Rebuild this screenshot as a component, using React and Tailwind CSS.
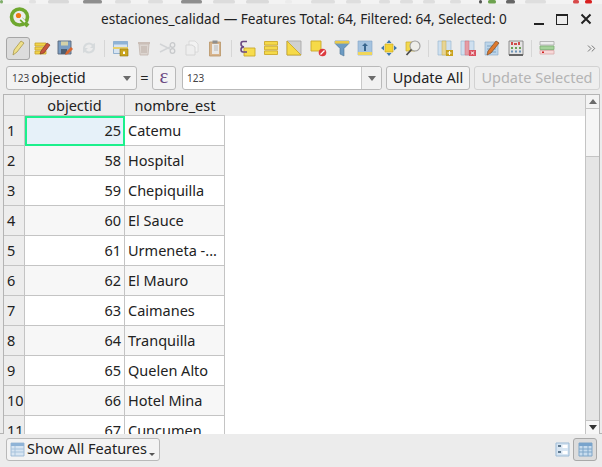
import React from 'react'
import { ChevronsRight } from 'lucide-react'

const font = { fontFamily: '"Noto Sans", sans-serif' }

const rows = [
  [1, 25, 'Catemu'],
  [2, 58, 'Hospital'],
  [3, 59, 'Chepiquilla'],
  [4, 60, 'El Sauce'],
  [5, 61, 'Urmeneta -...'],
  [6, 62, 'El Mauro'],
  [7, 63, 'Caimanes'],
  [8, 64, 'Tranquilla'],
  [9, 65, 'Quelen Alto'],
  [10, 66, 'Hotel Mina'],
  [11, 67, 'Cuncumen'],
]

// x, width, colour of what shows of the desktop above the window
const desktopBits = [
  [0, 3, '#7fae6a'], [29, 7, '#e2e2e2'], [48, 21, '#d9d9d9'], [83, 19, '#8e8e8e'],
  [115, 16, '#dedede'], [148, 15, '#dedede'], [181, 21, '#8e8e8e'], [213, 22, '#dcdcdc'],
  [246, 23, '#dadada'], [285, 7, '#ececec'], [311, 24, '#dedede'], [346, 15, '#dedede'],
  [379, 11, '#dedede'], [400, 13, '#dedede'], [423, 12, '#dedede'], [450, 11, '#dedede'],
  [479, 3, '#555555'], [488, 8, '#6da24f'], [506, 9, '#666666'], [525, 21, '#dedede'],
  [573, 6, '#d84a4a'], [585, 7, '#d81f1f'],
]

function Svg({ children, size = 18 }) {
  return (
    <svg width={size} height={size} viewBox="0 0 18 18" className="block">
      {children}
    </svg>
  )
}

function Logo() {
  return (
    <svg width="24" height="24" viewBox="0 0 24 24" className="block">
      <circle cx="11.5" cy="11" r="8" fill="none" stroke="#6fa82f" strokeWidth="3.6" />
      <path d="M13 13l7 7" stroke="#6fa82f" strokeWidth="4" />
      <path d="M11 10l6 6" stroke="#f5f5f5" strokeWidth="2" />
      <circle cx="10.5" cy="9.5" r="2.6" fill="#ee7913" />
    </svg>
  )
}

const icons = {
  toggle: (
    <Svg>
      <path d="M4 16l1-5 7-9 3 2-7 9z" fill="#efe08a" stroke="#a8984e" strokeWidth=".8" />
    </Svg>
  ),
  edits: (
    <Svg>
      <path d="M2 4h11v3H2zM2 8h11v3H2zM2 12h11v3H2z" fill="#f1d34a" stroke="#c9a52b" strokeWidth=".8" />
      <path d="M7 15l1-3 6-8 3 2-6 8z" fill="#c8553d" stroke="#7e3526" strokeWidth=".7" />
    </Svg>
  ),
  save: (
    <Svg>
      <path d="M2 2h13v13H2z" fill="#7b9dc2" stroke="#59677a" strokeWidth=".9" />
      <path d="M5 2.500h7v4H5z" fill="#d6d2a8" />
      <path d="M5 10h6v5H5z" fill="#4e5d70" />
      <path d="M9 16l1-3 5-5 2 2-5 5z" fill="#d8662f" />
    </Svg>
  ),
  reload: (
    <Svg>
      <path d="M3 9a6 6 0 0 1 10-4l2-1v5h-5l2-2a4 4 0 0 0-7 2zM15 9a6 6 0 0 1-10 4l-2 1V9h5l-2 2a4 4 0 0 0 7-2z" fill="#d6dadc" />
    </Svg>
  ),
  add: (
    <Svg>
      <path d="M1.500 2.500h14v12h-14z" fill="#d7e4f1" stroke="#7fa3c6" strokeWidth=".8" />
      <path d="M1.500 2.500h14v3h-14z" fill="#8fb3d6" />
      <path d="M1 8h15v2H1z" fill="#e8cf6a" />
      <path d="M8 10h8v7H8z" fill="#caa51e" stroke="#927712" strokeWidth=".6" />
      <path d="M11 12l1 1 1-1v3h-2z" fill="#fff" />
    </Svg>
  ),
  trash: (
    <Svg>
      <path d="M4 5h10l-1 11H5z" fill="#dcd5d0" stroke="#c3b6ae" strokeWidth=".8" />
      <path d="M3 3h12v2H3z" fill="#cbbfb8" />
      <path d="M7 7v7M9 7v7M11 7v7" stroke="#bcaea6" />
    </Svg>
  ),
  cut: (
    <Svg>
      <path d="M1 5l10 5M1 13l10-5" stroke="#d2d4d6" strokeWidth="1.400" />
      <circle cx="13.500" cy="6" r="2.300" fill="none" stroke="#c7c9cb" strokeWidth="1.300" />
      <circle cx="13.500" cy="12" r="2.300" fill="none" stroke="#c7c9cb" strokeWidth="1.300" />
    </Svg>
  ),
  copy: (
    <Svg>
      <path d="M6 2h6l3 3v8H6z" fill="#f2f2f2" stroke="#d8d8d8" strokeWidth=".9" />
      <path d="M3 6h6l3 2v8H3z" fill="#eeeeee" stroke="#d2d2d2" strokeWidth=".9" />
    </Svg>
  ),
  paste: (
    <Svg>
      <path d="M3.500 3h11v14h-11z" fill="#d8b48c" stroke="#b99467" strokeWidth=".8" />
      <path d="M6 5h7v10H6z" fill="#e9e9e9" />
      <path d="M6.500 1.500h5v3h-5z" fill="#8f8f8f" />
      <path d="M8 7h4M8 9h4M8 11h4" stroke="#b9b9b9" />
    </Svg>
  ),
  expr: (
    <Svg>
      <path d="M6 9h11v8H6z" fill="#f7dc4d" stroke="#c9a92b" strokeWidth=".9" />
      <path d="M9 2.500H5Q3 2.500 3 5t3 3Q3 8 3 10.500T5 13h4" fill="none" stroke="#6b4a82" strokeWidth="1.600" />
    </Svg>
  ),
  selectAll: (
    <Svg>
      <path d="M2.500 2.500h13v3.600h-13zM2.500 7.200h13v3.600h-13zM2.500 11.900h13v3.600h-13z" fill="#f5da4a" stroke="#cca92b" strokeWidth=".9" />
    </Svg>
  ),
  invert: (
    <Svg>
      <path d="M2 2h14v14H2z" fill="#d0d0d0" stroke="#aaa" strokeWidth=".9" />
      <path d="M2 2l14 14H2z" fill="#f6da48" stroke="#c9a92b" strokeWidth=".9" />
    </Svg>
  ),
  deselect: (
    <Svg>
      <path d="M2 2h10v10H2z" fill="#f6da48" stroke="#c9a92b" strokeWidth=".9" />
      <circle cx="13.500" cy="13.500" r="3.800" fill="#dc3a3f" />
      <path d="M11.500 15.500l4-4" stroke="#fff" strokeWidth="1.200" />
    </Svg>
  ),
  filter: (
    <Svg>
      <path d="M2 2h14v2.400l-5 5V17l-4-2V9.400l-5-5z" fill="#6c9bc3" stroke="#4f7595" strokeWidth=".6" />
      <path d="M2 2h14v2.600H2z" fill="#e9c94a" />
    </Svg>
  ),
  moveTop: (
    <Svg>
      <path d="M2 2h14v14H2z" fill="#a5c3df" stroke="#7fa3c6" strokeWidth=".6" />
      <path d="M2 13h14v3H2z" fill="#f0d65a" />
      <path d="M9 4l3 3h-2v5H8V7H6z" fill="#38658d" />
    </Svg>
  ),
  pan: (
    <Svg>
      <path d="M5 5h8v8H5z" fill="#f3d437" stroke="#c9a92b" strokeWidth=".7" />
      <path d="M9 1l2.500 3h-5zM9 17l2.500-3h-5zM1 9l3-2.500v5zM17 9l-3-2.500v5z" fill="#3e76ad" />
    </Svg>
  ),
  zoom: (
    <Svg>
      <path d="M2 3h9v9H2z" fill="#f3d94e" stroke="#c9a92b" strokeWidth=".7" />
      <circle cx="11" cy="7" r="5" fill="#eeeeea" stroke="#9e9e9e" strokeWidth="1.100" />
      <path d="M7.500 10.500L2.500 16" stroke="#4b4b4b" strokeWidth="1.800" />
    </Svg>
  ),
  newField: (
    <Svg>
      <path d="M2 2h13v14H2z" fill="#cfe0ef" stroke="#92b1cd" strokeWidth=".6" />
      <path d="M6 2h4v14H6z" fill="#e7d596" stroke="#c7ab4a" strokeWidth=".5" />
      <path d="M10 11h7v6h-7z" fill="#c9a21d" />
      <path d="M13.500 12v4M11.500 14h4" stroke="#fff" />
    </Svg>
  ),
  delField: (
    <Svg>
      <path d="M2 2h13v14H2z" fill="#cfe0ef" stroke="#92b1cd" strokeWidth=".6" />
      <path d="M6 2h4v14H6z" fill="#e59ca4" stroke="#cf6f7b" strokeWidth=".5" />
      <path d="M10 11h7v6h-7z" fill="#d9505e" />
      <path d="M11.800 12.500l3.400 3M15.200 12.500l-3.400 3" stroke="#fff" />
    </Svg>
  ),
  editField: (
    <Svg>
      <path d="M2 3h13v13H2z" fill="#bcd5ea" stroke="#86a9c8" strokeWidth=".6" />
      <path d="M4 7h9M4 10h9M4 13h9" stroke="#7ea3c3" />
      <path d="M4 16l1-4 8-10 3 2-8 10z" fill="#de7a2f" stroke="#7e4a23" strokeWidth=".7" />
    </Svg>
  ),
  calc: (
    <Svg>
      <path d="M2 2h14v14H2z" fill="#e4e4e4" stroke="#777" strokeWidth=".8" />
      <path d="M2 15h14v2H2z" fill="#666" />
      <path d="M4 3h2v3H4zM11 3h2v3h-2z" fill="#cf4c4c" />
      <path d="M7 4h3v2H7z" fill="#cf4c4c" />
      <path d="M4 8h2v2H4zM8 8h2v2H8zM12 8h2v2h-2z" fill="#6a9e55" />
      <path d="M4 11.500h2v2H4zM8 11.500h2v2H8zM12 11.500h2v2h-2z" fill="#6d94b8" />
    </Svg>
  ),
  cond: (
    <Svg>
      <path d="M2 2.500h14v3.500H2z" fill="#ededed" stroke="#a9a9a9" strokeWidth=".8" />
      <path d="M2 7h14v3.500H2z" fill="#a5d39a" stroke="#7eae73" strokeWidth=".8" />
      <path d="M2 11.500h14V15H2z" fill="#f7d8d8" stroke="#d8a8a8" strokeWidth=".8" />
      <path d="M4 13.200h2" stroke="#d21f1f" strokeWidth="1.400" />
    </Svg>
  ),
}

function ToolBtn({ name, active }) {
  return (
    <div
      className={`w-[23.7px] h-[23px] flex items-center justify-center rounded-[3px] ${
        active ? 'bg-[#dcdcdc] border border-[#a6a6a6]' : ''
      }`}
    >
      {icons[name]}
    </div>
  )
}

const Sep = () => (
  <div className="w-[8px] flex justify-center">
    <div className="w-px h-[17px] bg-[#d6d6d6]" />
  </div>
)

function Toolbar() {
  const groups = [
    ['edits', 'save', 'reload'],
    ['add', 'trash', 'cut', 'copy', 'paste'],
    ['expr', 'selectAll', 'invert', 'deselect', 'filter', 'moveTop', 'pan', 'zoom'],
    ['newField', 'delField', 'editField', 'calc'],
    ['cond'],
  ]
  return (
    <div className="h-[28px] pl-[6px] pr-[3px] flex items-center">
      <ToolBtn name="toggle" active />
      {groups.map((g, i) => (
        <React.Fragment key={i}>
          {g.map((n) => <ToolBtn key={n} name={n} />)}
          {i < groups.length - 1 && <Sep />}
        </React.Fragment>
      ))}
      <div className="ml-auto mr-[1px] text-[#666]">
        <ChevronsRight size={13} strokeWidth={1.6} />
      </div>
    </div>
  )
}

const Caret = ({ className = '' }) => (
  <div className={`w-0 h-0 border-x-[4.5px] border-x-transparent border-t-[5px] border-t-[#6b6b6b] ${className}`} />
)

const Tag = () => <span className="text-[10px] text-[#444] leading-none mr-[2px]">123</span>

function UpdateBar() {
  return (
    <div className="h-[24px] mt-[4px] pl-[6px] pr-[2px] flex items-stretch text-[14.5px] text-[#222]">
      <div className="w-[131px] bg-[#f3f3f3] border border-[#b9b9b9] rounded-[3px] flex items-center pl-[5px] pr-[5px]">
        <Tag />
        <span className="flex-1">objectid</span>
        <Caret />
      </div>
      <div className="w-[15px] flex items-center justify-center">=</div>
      <div className="w-[24px] bg-[#f3f3f3] border border-[#b9b9b9] rounded-[3px] flex items-center justify-center text-[#6b4a82] text-[21px] leading-none pb-[3px] font-['Liberation_Serif',serif]">
        ε
      </div>
      <div className="w-[200px] ml-[6px] bg-white border border-[#b9b9b9] rounded-[3px] flex items-center">
        <div className="flex-1 pl-[4px] flex items-center"><Tag /></div>
        <div className="w-[20px] h-full border-l border-[#c9c9c9] bg-[#f1f1f1] rounded-r-[3px] flex items-center justify-center">
          <Caret />
        </div>
      </div>
      <button className="w-[84px] ml-[4px] bg-[#f3f3f3] border border-[#b9b9b9] rounded-[3px]">Update All</button>
      <button className="w-[126px] ml-[4px] bg-[#eeeeee] border border-[#d2d2d2] rounded-[3px] text-[#b4b4b4]">Update Selected</button>
    </div>
  )
}

function Scrollbar() {
  return (
    <div className="w-[14px] border-l border-[#c4c4c4] flex flex-col bg-[#e5e5e5]">
      <div className="h-[14px] bg-[#f3f3f3] border-b border-[#c4c4c4] flex items-center justify-center">
        <Caret className="rotate-180" />
      </div>
      <div className="h-[48px] bg-[#f5f5f5] border-b border-[#c4c4c4]" />
      <div className="flex-1" />
      <div className="h-[14px] bg-[#f7f7f7] border-t border-[#c4c4c4] flex items-center justify-center">
        <Caret className="border-t-[#333]" />
      </div>
    </div>
  )
}

function Table() {
  return (
    <div className="h-[340px] ml-[3px] mr-[2px] mt-[4px] border border-b-0 border-[#b4b4b4] flex overflow-hidden">
      <div className="flex-1 min-w-0 flex flex-col overflow-hidden bg-white">
        <div className="h-[21px] shrink-0 bg-[#ededed] flex text-[14.5px] text-[#222] leading-[21px]">
          <div className="w-[21px] border-r border-b border-[#c4c4c4]" />
          <div className="w-[100px] border-r border-b border-[#c4c4c4] text-center">objectid</div>
          <div className="w-[100px] border-b border-[#c4c4c4] text-center">nombre_est</div>
        </div>
        {rows.map(([n, id, name], i) => (
          <div key={n} className={`h-[30px] shrink-0 flex text-[14.5px] text-[#222] leading-[29px] ${i % 2 ? 'bg-[#f7f7f7]' : 'bg-white'} w-[221px]`}>
            <div className="w-[21px] bg-[#ededed] border-r border-b border-[#c4c4c4] pl-[3px]">{n}</div>
            {i === 0 ? (
              <div className="w-[100px] bg-[#e6f1f9] border-2 border-[#1cf08c] text-right pr-[2px] leading-[25px]">{id}</div>
            ) : (
              <div className="w-[100px] border-r border-b border-[#c4c4c4] text-right pr-[3px]">{id}</div>
            )}
            <div className="w-[100px] border-r border-b border-[#c4c4c4] pl-[3px] whitespace-nowrap overflow-hidden">{name}</div>
          </div>
        ))}
      </div>
      <Scrollbar />
    </div>
  )
}

function BottomBar() {
  return (
    <div className="h-[34px] border-t border-[#b4b4b4] -mt-px pl-[6px] pr-[5px] pb-[3px] flex items-center text-[14.5px] text-[#222]">
      <div className="w-[154px] h-[23px] bg-[#f3f3f3] border border-[#b9b9b9] rounded-[3px] flex items-center pl-[3px] relative">
        <svg width="15" height="15" viewBox="0 0 15 15" className="mr-[2px]">
          <path d="M1 1h13v13H1z" fill="#d7e5f2" stroke="#8fb0cf" strokeWidth=".8" />
          <path d="M1 1h13v3H1z" fill="#8fb3d6" />
          <path d="M1 7h13M1 10h13M5 4v10" stroke="#a8c3dc" />
        </svg>
        <span>Show All Features</span>
        <div className="absolute right-[4px] bottom-[4px] w-0 h-0 border-x-[3px] border-x-transparent border-t-[3px] border-t-[#555]" />
      </div>
      <div className="ml-auto mr-[3px]">
        <svg width="15" height="15" viewBox="0 0 15 15" className="block">
          <path d="M1 1h13v13H1z" fill="#d7e5f2" stroke="#9dbbd6" />
          <path d="M3 4h3M3 10h3" stroke="#39546e" strokeWidth="1.400" />
          <path d="M7.500 3h5v3h-5zM7.500 9h5v3h-5z" fill="#fff" />
        </svg>
      </div>
      <div className="w-[24px] h-[23px] bg-[#dcdcdc] border border-[#a9a9a9] rounded-[3px] flex items-center justify-center">
        <svg width="15" height="15" viewBox="0 0 15 15" className="block">
          <path d="M1 1h13v13H1z" fill="#c7dcee" stroke="#7fa6c9" />
          <path d="M1 1h13v3H1z" fill="#79a4cc" />
          <path d="M1 7h13M1 10h13M5 4v10M10 4v10" stroke="#7fa6c9" />
        </svg>
      </div>
    </div>
  )
}

function TitleBar() {
  return (
    <div className="h-[30px] flex items-center relative">
      <div className="pl-[8px] pb-[3px] w-[101px] shrink-0"><Logo /></div>
      <div className="text-[13.6px] text-[#222] whitespace-nowrap pt-[1px]">
        estaciones_calidad — Features Total: 64, Filtered: 64, Selected: 0
      </div>
      <div className="absolute right-[10px] top-[9px] flex items-center gap-[12px] text-[#222]">
        <div className="w-[10px] h-[11px] flex items-end"><div className="w-full h-[2px] bg-[#222]" /></div>
        <div className="w-[12px] h-[11px] border border-[#222] border-t-2" />
        <svg width="12" height="12" viewBox="0 0 12 12" className="block">
          <path d="M1.500 1.500l9 9M10.500 1.500l-9 9" stroke="#222" strokeWidth="2" />
        </svg>
      </div>
    </div>
  )
}

export default function App() {
  return (
    <div className="w-[602px] h-[467px] bg-[#ececec] overflow-hidden" style={font}>
      <svg width="602" height="4" className="block bg-[#f3f3f3]">
        {desktopBits.map(([x, w, c]) => (
          <rect key={x} x={x} y="0" width={w} height="3.500" rx="1.500" fill={c} />
        ))}
      </svg>
      <TitleBar />
      <Toolbar />
      <UpdateBar />
      <Table />
      <BottomBar />
    </div>
  )
}
